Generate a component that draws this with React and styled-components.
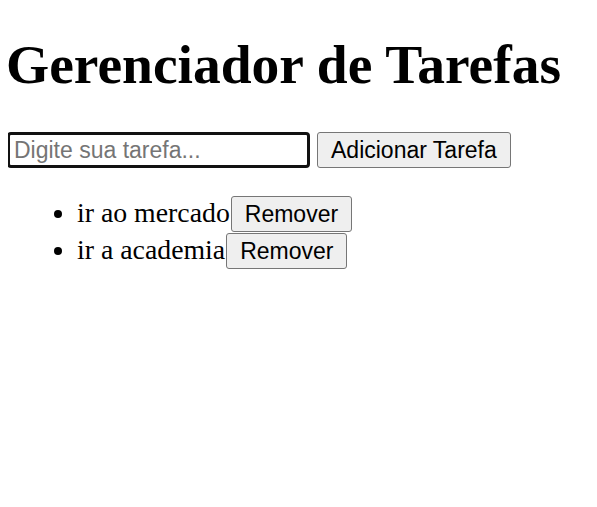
import styled, { createGlobalStyle } from 'styled-components'
import { useState } from 'react'

const GlobalStyle = createGlobalStyle`
  body {
    margin: 8px;
    background: #ffffff;
    color: #000000;
    font-family: "Liberation Serif", "Times New Roman", serif;
    font-size: 27.8px;
  }
`

const Title = styled.h1`
  font-size: 55.5px;
  font-weight: bold;
  margin: 25px 0 36px -2px;
`

const Form = styled.div`
  display: flex;
  align-items: center;
  gap: 7px;
  margin-left: -1px;
`

const Input = styled.input`
  box-sizing: border-box;
  width: 303px;
  height: 36px;
  padding: 0 4px;
  border: 3px solid #111111;
  border-radius: 4px;
  outline: none;
  font-family: "Liberation Sans", Arial, sans-serif;
  font-size: 23px;
  color: #000000;

  &::placeholder {
    color: #757575;
  }
`

const Button = styled.button`
  box-sizing: border-box;
  height: 36px;
  padding: 0 13px;
  background: #efefef;
  border: 1px solid #767676;
  border-radius: 3px;
  font-family: "Liberation Sans", Arial, sans-serif;
  font-size: 23px;
  color: #000000;
`

const List = styled.ul`
  margin: 28px 0 0;
  padding-left: 69px;
`

const Item = styled.li`
  line-height: 30px;

  & > button {
    vertical-align: baseline;
    margin: 0 0 1px 1px;
  }
`

export default function App() {
  const [tasks] = useState(['ir ao mercado', 'ir a academia'])

  return (
    <>
      <GlobalStyle />
      <Title>Gerenciador de Tarefas</Title>
      <Form>
        <Input autoFocus placeholder="Digite sua tarefa..." />
        <Button>Adicionar Tarefa</Button>
      </Form>
      <List>
        {tasks.map((t) => (
          <Item key={t}>
            {t}
            <Button>Remover</Button>
          </Item>
        ))}
      </List>
    </>
  )
}
